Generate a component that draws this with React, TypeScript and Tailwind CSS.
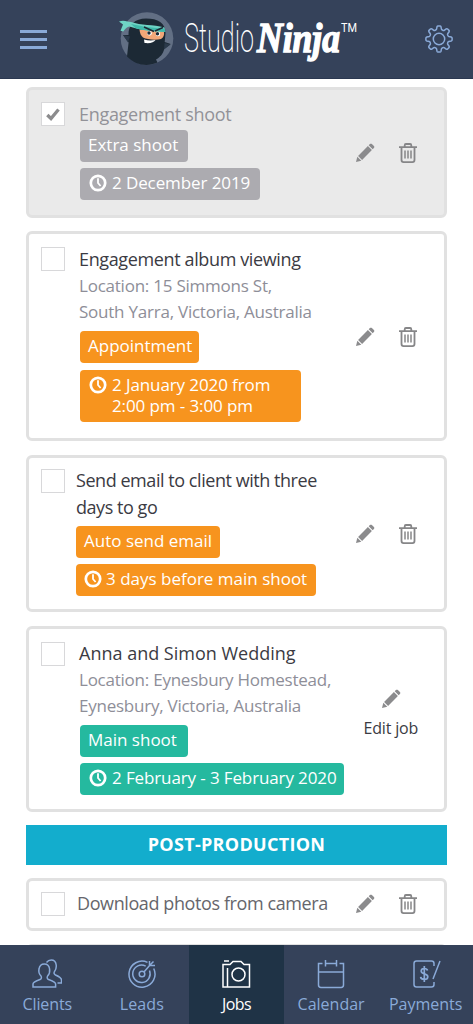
import type { ReactNode } from 'react'
import clsx from 'clsx'

function Logo() {
  return (
    <svg width="240" height="64" viewBox="118 8 240 64" role="img" aria-label="StudioNinja">
      <circle cx="147" cy="39.500" r="26.300" fill="#626f84" />
      <path
        d="M128.500 36c-.5-10 6.500-16.500 17.500-16.500 12 0 19.500 4.500 19.500 14.500l-.8 9 6 2-6.500 5c-1 5-4.500 8.500-8.200 10.500l1.500 3c-10 4.500-21.500 3-30.500-6l1.600-14-5.600-7.500z"
        fill="#1c2935"
      />
      <path d="M123 36l7 1.500-2 6z" fill="#2b3a4b" />
      <path d="M164.500 44l6 1.500-6.500 5z" fill="#2b3a4b" />
      <path d="M139.500 30.500l24.500 2c.5 3.500-.5 6-3 7.500-6 1.500-14 .5-18-1.500-2-1.500-3.200-4.500-3.500-8z" fill="#f2a778" />
      <path d="M119 22.500c5-2 9 .5 12 .5 10 3.500 22 2.500 33.500 5.500l.8 4.500c-13-.5-24-1.500-36-5.500-2 .5-4 2-6 5l-2.800-.7 2.500-6.300z" fill="#6fd3c5" />
      <path d="M131 25l14 2.800 20 2.300.3 2.900c-10-.2-22-1.500-30-4z" fill="#3fb9aa" />
      <path d="M144 28l10 4.500M163 28.500l-8 3.500" stroke="#1c2935" strokeWidth="1.600" />
      <circle cx="149.500" cy="34.300" r="2.300" fill="#fff" />
      <circle cx="158" cy="35" r="2.200" fill="#fff" />
      <circle cx="149" cy="34" r="1.700" fill="#1c2935" />
      <circle cx="157.500" cy="34.800" r="1.700" fill="#1c2935" />
      <path d="M144 40.500c3.500 1 7.500 1.200 11.500.5-1.500 2.500-5 3.600-11 3z" fill="#fff" />
      <text fill="#fff">
        <tspan x="184" y="53" fontFamily="Roboto, sans-serif" fontWeight="200" fontSize="41" textLength="70" lengthAdjust="spacingAndGlyphs">
          Studio
        </tspan>
        <tspan
          x="257"
          y="53"
          stroke="#fff"
          strokeWidth="1.500"
          fontFamily="Liberation Serif, serif"
          fontWeight="700"
          fontStyle="italic"
          fontSize="43"
          textLength="83"
          lengthAdjust="spacingAndGlyphs"
        >
          Ninja
        </tspan>
        <tspan x="341" y="33" fontFamily="Roboto, sans-serif" fontSize="12" textLength="16" lengthAdjust="spacingAndGlyphs">
          TM
        </tspan>
      </text>
    </svg>
  )
}

function GearIcon() {
  return (
    <svg width="28" height="28" viewBox="0 0 28 28" fill="none" stroke="#8aaad8" strokeWidth="1.500" strokeLinejoin="round">
      <circle cx="14" cy="14" r="5.700" />
      <path d="M11.500 4.300 12 1.800c.2-.6.500-.9 1-.9h2c.5 0 .8.300 1 .9l.5 2.500c.2.800 2 1.500 2.700 1l2-1.400c.5-.3 1-.3 1.400.1l1.400 1.400c.4.400.4.900.1 1.400l-1.400 2c-.5.700.2 2.500 1 2.700l2.500.5c.6.200.9.500.9 1v2c0 .5-.3.800-.9 1l-2.500.5c-.8.200-1.500 2-1 2.700l1.400 2c.3.500.3 1-.1 1.400l-1.400 1.400c-.4.400-.9.400-1.400.1l-2-1.400c-.7-.5-2.500.2-2.700 1l-.5 2.500c-.2.600-.5.900-1 .9h-2c-.5 0-.8-.3-1-.9l-.5-2.500c-.2-.8-2-1.500-2.700-1l-2 1.400c-.5.300-1 .3-1.400-.1L4 22.600c-.4-.4-.4-.9-.1-1.400l1.400-2c.5-.7-.2-2.500-1-2.700L1.800 16c-.6-.2-.9-.5-.9-1v-2c0-.5.3-.8.9-1l2.500-.5c.8-.2 1.500-2 1-2.700l-1.400-2c-.3-.5-.3-1 .1-1.400L5.400 4c.4-.4.9-.4 1.400-.1l2 1.400c.7.500 2.500-.2 2.700-1z" />
    </svg>
  )
}

function PencilIcon() {
  return (
    <svg width="20" height="20" viewBox="0 0 20 20" fill="#8b8b8d">
      <path d="M1 19l1.300-5.300 4 4z" />
      <path d="M3.100 12.900 12.900 3.100l4 4-9.800 9.800z" />
      <path d="M13.700 2.300l1.200-1.200c.6-.6 1.400-.6 2 0l2 2c.6.600.6 1.400 0 2l-1.200 1.200z" />
    </svg>
  )
}

function TrashIcon() {
  return (
    <svg width="18" height="20" viewBox="0 0 18 20" fill="none" stroke="#868688" strokeWidth="1.800">
      <path d="M0 4.200h18M5.700 4V2.400c0-.9.400-1.400 1.200-1.400h4.200c.8 0 1.200.5 1.200 1.400V4M2.500 4.500v12.600c0 1.300.7 2 2 2h9c1.300 0 2-.7 2-2V4.500" />
      <path d="M6 7.500v8M9 7.500v8M12 7.500v8" strokeWidth="1.500" />
    </svg>
  )
}

function ClockIcon() {
  return (
    <svg width="18" height="18" viewBox="0 0 18 18" fill="none" stroke="#fff" className="mt-[2px] shrink-0">
      <circle cx="9" cy="9" r="7.200" strokeWidth="2.700" />
      <path d="M9 4.300V9l2.600 3" strokeWidth="1.800" />
    </svg>
  )
}

const chipColors = {
  gray: 'bg-[#acabb0]',
  orange: 'bg-[#f7941e]',
  green: 'bg-[#25b99f]',
}

type Color = keyof typeof chipColors

function Chip({ color, className, children }: { color: Color; className: string; children: ReactNode }) {
  return (
    <div className={clsx('flex rounded-[4px] pt-[4px] text-[17px] leading-[21px] whitespace-nowrap text-white', chipColors[color], className)}>
      {children}
    </div>
  )
}

function Checkbox({ checked }: { checked?: boolean }) {
  return (
    <div className="flex size-6 shrink-0 items-center justify-center border border-[#d8d8da] bg-white">
      {checked && (
        <svg width="14" height="13" viewBox="0 0 14 13" fill="none" stroke="#8b8b8d" strokeWidth="3.300">
          <path d="M1.300 7 5 10.500 12.500 1.500" />
        </svg>
      )}
    </div>
  )
}

function Card({ className, children }: { className: string; children?: ReactNode }) {
  return <div className={clsx('flex shrink-0 rounded-[6px] border-[3px] border-[#e1e1e1] pl-[12px]', className)}>{children}</div>
}

function Actions({ className }: { className: string }) {
  return (
    <div className={clsx('mr-[27px] ml-auto flex items-center gap-[24px] self-start', className)}>
      <PencilIcon />
      <TrashIcon />
    </div>
  )
}

const navItems = [
  {
    label: 'Clients',
    tracking: 'tracking-[-0.1px]',
    icon: (
      <>
        <path d="M1 28v-3c0-2 3-3 7-4.500 1.500-.6 1.800-2 1-3.500C7 15 6.500 12.500 7 10c.5-3.200 2.500-5 5.300-5s4.900 1.800 5.300 5c.4 2.500-.1 5-2 7-.8 1.500-.5 2.900 1 3.500 4 1.500 7 2.500 7 4.500v3z" />
        <path d="M14.500 3.500C16 1.500 17.500 1 19.200 1c3 0 4.700 2 5 5 .3 2.600-.3 4.800-1.700 6.500-.8 1.500-.5 2.800 1 3.500 4 1.700 6 2.700 6 5v3h-4" />
      </>
    ),
  },
  {
    label: 'Leads',
    tracking: 'tracking-[0.1px]',
    icon: (
      <>
        <path d="M20.500 3.400A13 13 0 1 0 26.700 9.500" />
        <path d="M18.700 7.200A8.700 8.700 0 1 0 22.500 11.500" />
        <circle cx="15" cy="15" r="2.800" />
        <path d="m17 13 6-7M22.500 2v4.500H28M23 6l3.500-3.500" />
      </>
    ),
  },
  {
    label: 'Jobs',
    tracking: 'tracking-[-0.6px]',
    icon: (
      <>
        <path d="M2 5.500h7l3-3h8l3 3h5.500V28H2zM3 2h5M6.500 9v19" />
        <circle cx="17.500" cy="15.500" r="6.500" />
      </>
    ),
  },
  {
    label: 'Calendar',
    tracking: 'tracking-[0px]',
    icon: (
      <>
        <path d="M6.500 4.500H2.500v21.500c0 1.400 1 2.400 2.400 2.400h20.200c1.400 0 2.400-1 2.400-2.400V4.500h-4M2.500 13h25M12 4.500h6M9.500 1v6.500M20.500 1v6.500" />
        <path d="M9.500 4.500H12M18 4.500h2.500" />
      </>
    ),
  },
  {
    label: 'Payments',
    tracking: 'tracking-[0px]',
    icon: (
      <>
        <path d="M23 7V4.500C23 3 22 2 20.500 2h-15C4 2 3 3 3 4.500v21C3 27 4 28 5.500 28h15c1.500 0 2.500-1 2.500-2.500V23M29 2l-7 18" />
        <path d="M16.500 11.500c-.3-1.400-1.500-2-3.200-2-1.900 0-3.100.9-3.100 2.500 0 3.800 6.600 1.900 6.600 5.700 0 1.700-1.400 2.700-3.500 2.700s-3.500-.9-3.700-2.500M13.300 7v16" strokeWidth="1.700" />
      </>
    ),
  },
]

function TabBar() {
  return (
    <nav className="grid h-[79px] shrink-0 grid-cols-5 bg-[#35425a]">
      {navItems.map((item) => {
        const active = item.label === 'Jobs'
        return (
          <div key={item.label} className={clsx('flex flex-col items-center pt-[14px]', active ? 'bg-[#1f3346] text-white' : 'text-[#8aaad8]')}>
            <svg width="30" height="30" viewBox="0 0 30 30" fill="none" stroke="currentColor" strokeWidth="1.500">
              {item.icon}
            </svg>
            <span className={clsx('mt-[3px] text-[16px] leading-[24px]', item.tracking)}>{item.label}</span>
          </div>
        )
      })}
    </nav>
  )
}

export default function App() {
  return (
    <div className="flex h-[1024px] w-[473px] flex-col overflow-hidden bg-white font-['Open_Sans',sans-serif]">
      <header className="flex h-[79px] shrink-0 items-center justify-between border-b border-[#2b3851] bg-[#35425a] pr-5 pl-5">
        <div className="flex w-[27px] flex-col gap-[5px]">
          <div className="h-[3px] bg-[#8aaad8]" />
          <div className="h-[3px] bg-[#8aaad8]" />
          <div className="h-[3px] bg-[#8aaad8]" />
        </div>
        <div className="ml-[4px]">
          <Logo />
        </div>
        <GearIcon />
      </header>

      <main className="flex min-h-0 flex-1 flex-col overflow-hidden px-[26px] pt-2">
        <Card className="h-[131px] bg-[#eaeaea] pt-[12px]">
          <Checkbox checked />
          <div className="ml-[15px]">
            <h2 className="-ml-px text-[18px] leading-[24px] tracking-[-0.3px] whitespace-nowrap text-[#929298]">Engagement shoot</h2>
            <Chip color="gray" className="mt-[4px] h-[32px] w-[108px] pl-2">Extra shoot</Chip>
            <Chip color="gray" className="mt-[6px] h-[32px] w-[180px] gap-[5px] pl-[9px] tracking-[-0.1px]">
              <ClockIcon />
              2 December 2019
            </Chip>
          </div>
          <Actions className="mt-[41px]" />
        </Card>

        <Card className="mt-[13px] h-[210px] pt-[13px]">
          <Checkbox />
          <div className="ml-[15px]">
            <h2 className="-ml-px text-[18px] leading-[24px] tracking-[-0.37px] whitespace-nowrap text-[#3b3b43]">Engagement album viewing</h2>
            <p className="-ml-px pt-[2px] text-[17px] leading-[26px] tracking-[-0.23px] whitespace-nowrap text-[#8e8e98]">
              Location: 15 Simmons St,
              <br />
              South Yarra, Victoria, Australia
            </p>
            <Chip color="orange" className="mt-[6px] h-[32px] w-[119px] pl-2">Appointment</Chip>
            <Chip color="orange" className="mt-[7px] h-[52px] w-[221px] gap-[5px] pl-[9px] tracking-[-0.1px]">
              <ClockIcon />
              <span>
                2 January 2020 from
                <br />
                2:00 pm - 3:00 pm
              </span>
            </Chip>
          </div>
          <Actions className="mt-[80px]" />
        </Card>

        <Card className="mt-[14px] h-[157px] pt-[11px]">
          <Checkbox />
          <div className="-mt-[2px] ml-[11px]">
            <h2 className="text-[18px] leading-[27px] tracking-[-0.45px] whitespace-nowrap text-[#3b3b43]">
              Send email to client with three
              <br />
              days to go
            </h2>
            <Chip color="orange" className="mt-[5px] h-[32px] w-[144px] pl-2">Auto send email</Chip>
            <Chip color="orange" className="mt-[6px] h-[32px] w-[240px] gap-[4px] pl-2">
              <ClockIcon />
              3 days before main shoot
            </Chip>
          </div>
          <Actions className="mt-[55px]" />
        </Card>

        <Card className="mt-[14px] h-[186px] pt-[13px]">
          <Checkbox />
          <div className="-mt-px ml-[15px]">
            <h2 className="-ml-px text-[18px] leading-[24px] whitespace-nowrap text-[#3b3b43]">Anna and Simon Wedding</h2>
            <p className="-ml-px pt-[2px] text-[17px] leading-[26px] tracking-[-0.24px] whitespace-nowrap text-[#8e8e98]">
              Location: Eynesbury Homestead,
              <br />
              Eynesbury, Victoria, Australia
            </p>
            <Chip color="green" className="mt-[6px] h-[32px] w-[108px] pl-2">Main shoot</Chip>
            <Chip color="green" className="mt-[6px] h-[32px] w-[264px] gap-[5px] pl-[9px] tracking-[-0.12px]">
              <ClockIcon />
              2 February - 3 February 2020
            </Chip>
          </div>
          <div className="mt-[47px] mr-[26px] ml-auto flex flex-col items-center gap-[8px] self-start">
            <PencilIcon />
            <span className="text-[16px] leading-[22px] tracking-[-0.2px] whitespace-nowrap text-[#3b3b43]">Edit job</span>
          </div>
        </Card>

        <div className="mt-[13px] flex h-[40px] shrink-0 items-center justify-center bg-[#13adcd] pb-px text-[18px] font-bold tracking-[0.3px] text-white">
          POST-PRODUCTION
        </div>

        <Card className="mt-[13px] h-[53px] pt-[11px]">
          <Checkbox />
          <h2 className="-mt-px ml-[12px] text-[18px] leading-[24px] tracking-[-0.4px] whitespace-nowrap text-[#66666c]">Download photos from camera</h2>
          <Actions className="mt-[2px]" />
        </Card>

        <Card className="mt-[13px] h-[53px]" />
      </main>

      <TabBar />
    </div>
  )
}
